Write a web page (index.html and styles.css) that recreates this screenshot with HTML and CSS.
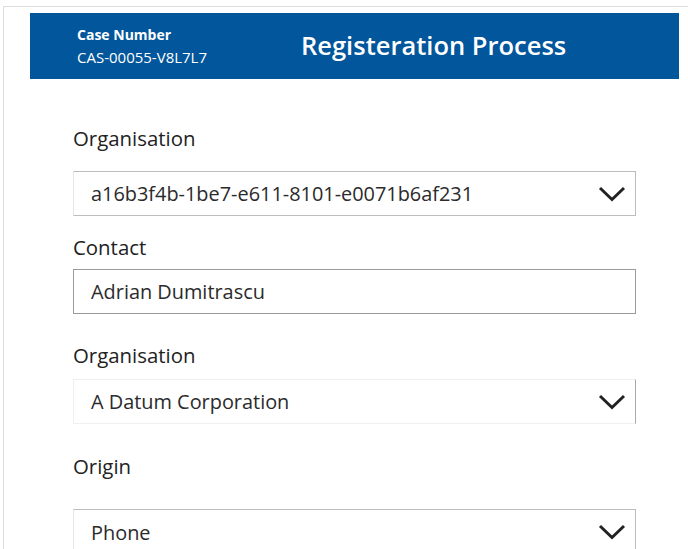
FILE: index.html
```html
<!DOCTYPE html>
<html>
<head>
<meta charset="utf-8">
<link rel="stylesheet" href="styles.css">
</head>
<body>
<div class="frame">
  <header class="banner">
    <div class="case">
      <div class="case-label">Case Number</div>
      <div class="case-value">CAS-00055-V8L7L7</div>
    </div>
    <h1 class="title">Registeration Process</h1>
  </header>
  <form class="form">
    <div class="field f1">
      <label class="label">Organisation</label>
      <div class="input sel1">
        <span class="value">a16b3f4b-1be7-e611-8101-e0071b6af231</span>
        <svg class="chev" width="28" height="16" viewBox="0 0 28 16"><polyline points="2,2 14,13.5 26,2" fill="none" stroke="#222" stroke-width="3"/></svg>
      </div>
    </div>
    <div class="field f2">
      <label class="label">Contact</label>
      <div class="input text">
        <span class="value">Adrian Dumitrascu</span>
      </div>
    </div>
    <div class="field f3">
      <label class="label">Organisation</label>
      <div class="input sel2">
        <span class="value">A Datum Corporation</span>
        <svg class="chev" width="28" height="16" viewBox="0 0 28 16"><polyline points="2,2 14,13.5 26,2" fill="none" stroke="#222" stroke-width="3"/></svg>
      </div>
    </div>
    <div class="field f4">
      <label class="label">Origin</label>
      <div class="input sel3">
        <span class="value">Phone</span>
        <svg class="chev" width="28" height="16" viewBox="0 0 28 16"><polyline points="2,2 14,13.5 26,2" fill="none" stroke="#222" stroke-width="3"/></svg>
      </div>
    </div>
  </form>
</div>
</body>
</html>
```
FILE: styles.css
```css
html, body {
  margin: 0;
  padding: 0;
  background: #fff;
  height: 100%;
  overflow: hidden;
}
body {
  font-family: "Open Sans", "Noto Sans", sans-serif;
  color: #333;
}
.frame {
  margin: 6px 0 0 3px;
  border-top: 1px solid #dedede;
  border-left: 1px solid #dcdcdc;
  height: calc(100% - 6px);
  overflow: hidden;
  box-sizing: border-box;
}
.banner {
  margin: 6px 0 0 26px;
  width: 649px;
  height: 66px;
  background: #02569b;
  color: #fff;
  display: flex;
  align-items: center;
  box-sizing: border-box;
  padding-left: 47px;
}
.case {
  width: 224px;
  display: flex;
  flex-direction: column;
  gap: 6px;
}
.case-label {
  font-weight: 700;
  font-size: 14px;
  line-height: 17px;
}
.case-value {
  font-size: 15px;
  line-height: 17px;
}
.title {
  margin: 0 0 2px 0;
  font-size: 25.5px;
  font-weight: 600;
  line-height: 32px;
}
.form {
  padding-left: 69px;
  margin: 0;
}
.field {
  display: flex;
  flex-direction: column;
  width: 563px;
}
.label {
  font-size: 20.4px;
  line-height: 28px;
  font-weight: 400;
  color: #222;
  margin-top: -1px;
  margin-bottom: 1px;
}
.input {
  height: 45px;
  box-sizing: border-box;
  display: flex;
  align-items: center;
  justify-content: space-between;
  padding: 0 9px 0 17px;
  font-size: 19.9px;
  color: #2b2b2b;
}
.f1 { margin-top: 46px; }
.f1 .input { margin-top: 18px; }
.f2 { margin-top: 18px; }
.f2 .input { margin-top: 7px; }
.f3 { margin-top: 28px; }
.f3 .input { margin-top: 9px; }
.f4 { margin-top: 29px; }
.f4 .input { margin-top: 28px; }
.sel1 {
  border-top: 1px solid #bdbdbd;
  border-bottom: 1px solid #bdbdbd;
  border-right: 1px solid #bdbdbd;
  border-left: 1px solid #e6e6e6;
}
.text {
  border: 1px solid #9a9a9a;
}
.sel2 {
  border: 1px solid #efefef;
  border-right: 1px solid #a8a8a8;
}
.sel3 {
  border-top: 1px solid #bdbdbd;
  border-right: 1px solid #bdbdbd;
  border-left: 1px solid #e6e6e6;
  height: 60px;
  padding-bottom: 15px;
}
.chev {
  display: block;
}
```
